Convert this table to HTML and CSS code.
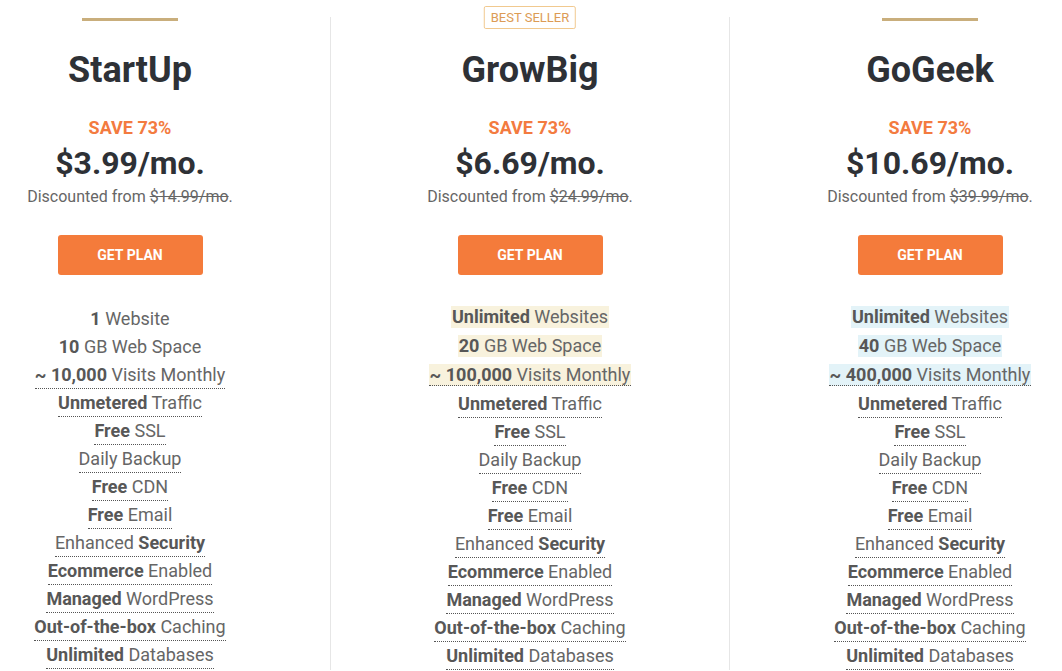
FILE: index.html
```html
<!DOCTYPE html>
<html lang="en">
<head>
<meta charset="utf-8">
<title>Plans</title>
<link rel="stylesheet" href="styles.css">
</head>
<body>
<div class="plans">
  <section class="plan">
    <div class="bar"></div>
    <h2 class="name">StartUp</h2>
    <div class="save">SAVE 73%</div>
    <div class="price">$3.99/mo.</div>
    <div class="from">Discounted from <s>$14.99/mo</s>.</div>
    <a class="btn" href="#">GET PLAN</a>
    <ul class="features">
      <li><span><b>1</b> Website</span></li>
      <li><span><b>10</b> GB Web Space</span></li>
      <li><span class="tip"><b>~ 10,000</b> Visits Monthly</span></li>
      <li><span class="tip"><b>Unmetered</b> Traffic</span></li>
      <li><span class="tip"><b>Free</b> SSL</span></li>
      <li><span class="tip">Daily Backup</span></li>
      <li><span class="tip"><b>Free</b> CDN</span></li>
      <li><span class="tip"><b>Free</b> Email</span></li>
      <li><span class="tip">Enhanced <b>Security</b></span></li>
      <li><span class="tip"><b>Ecommerce</b> Enabled</span></li>
      <li><span class="tip"><b>Managed</b> WordPress</span></li>
      <li><span class="tip"><b>Out-of-the-box</b> Caching</span></li>
      <li><span class="tip"><b>Unlimited</b> Databases</span></li>
    </ul>
  </section>
  <section class="plan plan-mid">
    <div class="badge">BEST SELLER</div>
    <div class="bar bar-hidden"></div>
    <h2 class="name">GrowBig</h2>
    <div class="save">SAVE 73%</div>
    <div class="price">$6.69/mo.</div>
    <div class="from">Discounted from <s>$24.99/mo</s>.</div>
    <a class="btn" href="#">GET PLAN</a>
    <ul class="features hl-gold">
      <li class="hl"><span><b>Unlimited</b> Websites</span></li>
      <li class="hl"><span><b>20</b> GB Web Space</span></li>
      <li class="hl"><span class="tip"><b>~ 100,000</b> Visits Monthly</span></li>
      <li><span class="tip"><b>Unmetered</b> Traffic</span></li>
      <li><span class="tip"><b>Free</b> SSL</span></li>
      <li><span class="tip">Daily Backup</span></li>
      <li><span class="tip"><b>Free</b> CDN</span></li>
      <li><span class="tip"><b>Free</b> Email</span></li>
      <li><span class="tip">Enhanced <b>Security</b></span></li>
      <li><span class="tip"><b>Ecommerce</b> Enabled</span></li>
      <li><span class="tip"><b>Managed</b> WordPress</span></li>
      <li><span class="tip"><b>Out-of-the-box</b> Caching</span></li>
      <li><span class="tip"><b>Unlimited</b> Databases</span></li>
    </ul>
  </section>
  <section class="plan">
    <div class="bar"></div>
    <h2 class="name">GoGeek</h2>
    <div class="save">SAVE 73%</div>
    <div class="price">$10.69/mo.</div>
    <div class="from">Discounted from <s>$39.99/mo</s>.</div>
    <a class="btn" href="#">GET PLAN</a>
    <ul class="features hl-blue">
      <li class="hl"><span><b>Unlimited</b> Websites</span></li>
      <li class="hl"><span><b>40</b> GB Web Space</span></li>
      <li class="hl"><span class="tip"><b>~ 400,000</b> Visits Monthly</span></li>
      <li><span class="tip"><b>Unmetered</b> Traffic</span></li>
      <li><span class="tip"><b>Free</b> SSL</span></li>
      <li><span class="tip">Daily Backup</span></li>
      <li><span class="tip"><b>Free</b> CDN</span></li>
      <li><span class="tip"><b>Free</b> Email</span></li>
      <li><span class="tip">Enhanced <b>Security</b></span></li>
      <li><span class="tip"><b>Ecommerce</b> Enabled</span></li>
      <li><span class="tip"><b>Managed</b> WordPress</span></li>
      <li><span class="tip"><b>Out-of-the-box</b> Caching</span></li>
      <li><span class="tip"><b>Unlimited</b> Databases</span></li>
    </ul>
  </section>
</div>
</body>
</html>
```
FILE: styles.css
```css
html, body {
  margin: 0;
  padding: 0;
  background: #ffffff;
  overflow: hidden;
}
body {
  font-family: Roboto, "Liberation Sans", Arial, sans-serif;
  color: #666666;
}
.plans {
  display: grid;
  grid-template-columns: repeat(3, 400px);
  width: 1200px;
  margin: 17px 0 0 -70px;
}
.plan {
  position: relative;
  box-sizing: border-box;
  display: flex;
  flex-direction: column;
  align-items: center;
  text-align: center;
}
.plan-mid {
  border-left: 1px solid #e6e6e6;
  border-right: 1px solid #e6e6e6;
}
.bar {
  width: 96px;
  height: 3px;
  margin-top: 1px;
  background: #c9ae7c;
}
.bar-hidden {
  background: transparent;
}
.badge {
  position: absolute;
  top: -11px;
  left: 50%;
  transform: translateX(-50%);
  box-sizing: border-box;
  height: 23px;
  line-height: 21px;
  padding: 0 6px;
  border: 1px solid #f1c98f;
  border-radius: 2px;
  background: #fff;
  color: #dc9b55;
  font-size: 13px;
  white-space: nowrap;
}
.name {
  margin: 27px 0 0;
  font-size: 36px;
  line-height: 44px;
  font-weight: 700;
  color: #2e3136;
}
.save {
  margin-top: 24px;
  font-size: 18px;
  line-height: 24px;
  font-weight: 700;
  color: #f37b40;
}
.price {
  margin-top: 4px;
  font-size: 32px;
  line-height: 38px;
  font-weight: 700;
  color: #2e3136;
}
.from {
  margin-top: 5px;
  font-size: 16px;
  line-height: 20px;
  color: #666;
}
.btn {
  display: block;
  margin-top: 28px;
  width: 145px;
  height: 40px;
  line-height: 40px;
  background: #f47b3b;
  border-radius: 3px;
  color: #fff;
  font-size: 14px;
  font-weight: 700;
  text-decoration: none;
}
.features {
  list-style: none;
  margin: 30px 0 0;
  padding: 0;
  font-size: 18px;
}
.features li {
  height: 28px;
}
.features span {
  display: inline-block;
  line-height: 27px;
  border-bottom: 1px solid transparent;
}
.features span.tip {
  border-bottom: 1px dotted #555;
}
.features b {
  font-weight: 700;
  color: #575757;
}
.hl-gold, .hl-blue {
  margin-top: 28px;
}
.features li.hl {
  height: 29px;
}
.features li.hl span {
  line-height: 21px;
  margin-top: 3px;
  padding: 0 1px;
}
.hl-gold li.hl span {
  background: #f8f2dd;
}
.hl-blue li.hl span {
  background: #e3f3f8;
}
```
